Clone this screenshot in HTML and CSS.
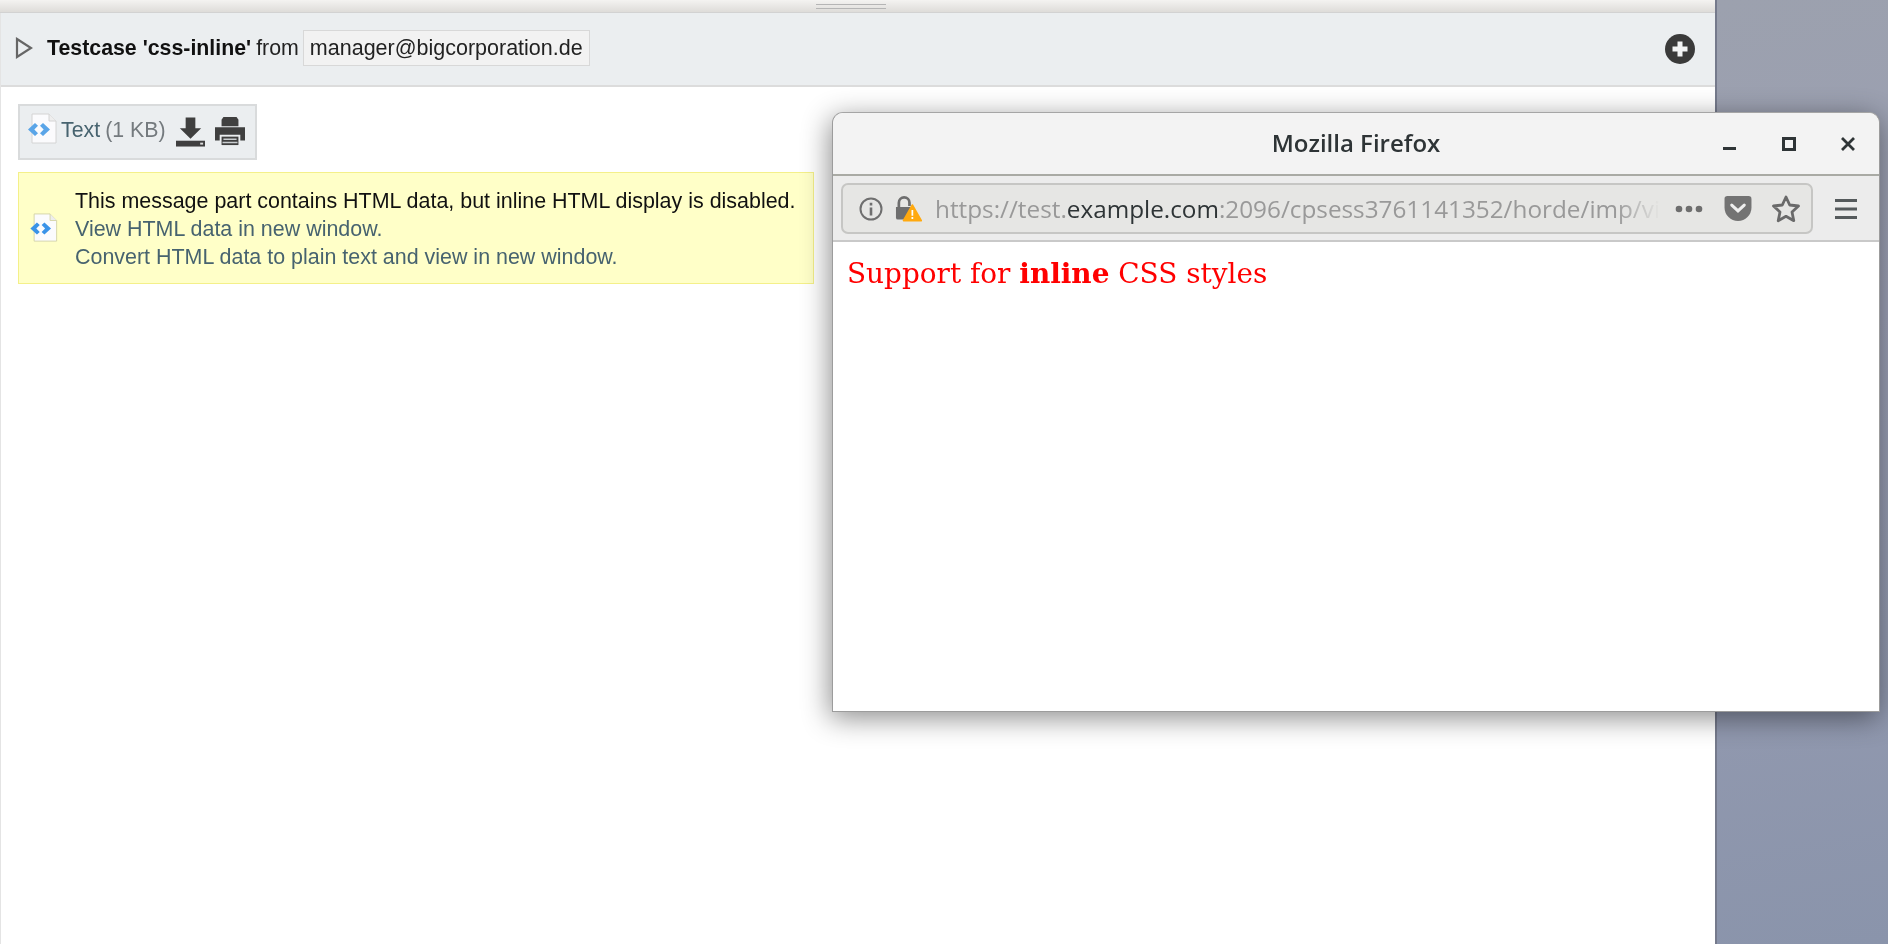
FILE: index.html
```html
<!DOCTYPE html>
<html lang="en">
<head>
<meta charset="utf-8">
<title>Testcase</title>
<link rel="stylesheet" href="styles.css">
</head>
<body>
<main class="mail">
  <div class="grip"><span class="grip-lines"></span></div>
  <header class="head">
    <svg class="arrow" viewBox="0 0 18 22"><path d="M2 2 L16 11 L2 20 Z" fill="none" stroke="#666" stroke-width="2.200"/></svg>
    <span class="subject">Testcase 'css-inline'</span>
    <span class="from">from</span>
    <span class="addr">manager@bigcorporation.de</span>
    <svg class="plus" viewBox="0 0 30 30"><circle cx="15" cy="15" r="15" fill="#3a3a3a"/><path d="M12.500 7.500h5v5h5v5h-5v5h-5v-5h-5v-5h5z" fill="#f2f3f4"/></svg>
  </header>
  <section class="body">
    <div class="part">
      <svg class="file" viewBox="0 0 30 32"><path d="M5 1h17l7 7v22H5z" fill="#fbfbfd" stroke="#d4d4d4"/><path d="M22 1v7h7" fill="#eee" stroke="#d4d4d4"/><path d="M8 10 1 16.500 8 23l3-2.800-3.700-3.700 3.700-3.700zM16 10l7 6.500-7 6.500-3-2.800 3.700-3.700-3.700-3.700z" fill="#5aa5e8"/></svg>
      <span class="part-name">Text</span>
      <span class="part-size">(1 KB)</span>
      <svg class="dl" viewBox="0 0 32 30"><path d="M11 0h10v11h6L16 22 5 11h6z" fill="#3f3f3f"/><path d="M1 24h30v6H1z" fill="#3f3f3f"/><path d="M26 26h3v2h-3z" fill="#ddd"/></svg>
      <svg class="print" viewBox="0 0 32 30"><path d="M9 0h14l2 3v7H7V3z" fill="#3f3f3f"/><path d="M0 11h32v14h-5v-6H5v6H0z" fill="#3f3f3f"/><path d="M7 21h18v9H7z" fill="#3f3f3f"/><path d="M9 23h14v1.500H9zM8 26.500h16v1.500H8z" fill="#c9cdd0"/></svg>
    </div>
    <div class="notice">
      <svg class="file-sm" viewBox="0 0 30 32"><path d="M5 1h17l7 7v22H5z" fill="#fbfbfd" stroke="#d4d4a8"/><path d="M22 1v7h7" fill="#eee" stroke="#d4d4a8"/><path d="M8 10 1 16.500 8 23l3-2.800-3.700-3.700 3.700-3.700zM16 10l7 6.500-7 6.500-3-2.800 3.700-3.700-3.700-3.700z" fill="#3a93e8"/></svg>
      <div class="notice-text">
        <div class="notice-msg">This message part contains HTML data, but inline HTML display is disabled.</div>
        <div class="notice-link">View HTML data in new window.</div>
        <div class="notice-link">Convert HTML data to plain text and view in new window.</div>
      </div>
    </div>
  </section>
</main>
<aside class="desktop"></aside>
<div class="ff">
  <div class="ff-title">
    <span class="ff-name">Mozilla Firefox</span>
    <div class="ff-controls">
      <svg class="wc" viewBox="0 0 16 16"><path d="M1 11h13v3H1z" fill="#2e3436"/></svg>
      <svg class="wc" viewBox="0 0 16 16"><path d="M1 1h14v14H1zM4 4v8h8V4z" fill="#2e3436" fill-rule="evenodd"/></svg>
      <svg class="wc" viewBox="0 0 16 16"><path d="M2 2l12 12M14 2L2 14" stroke="#2e3436" stroke-width="2.800" fill="none"/></svg>
    </div>
  </div>
  <div class="ff-toolbar">
    <div class="urlbar">
      <svg class="info" viewBox="0 0 24 24"><circle cx="12" cy="12" r="10.500" fill="none" stroke="#6f6f6f" stroke-width="2"/><path d="M10.700 10.500h2.600v8h-2.600zM10.700 5.800h2.600v2.700h-2.600z" fill="#6f6f6f"/></svg>
      <svg class="lock" viewBox="0 0 28 26"><path d="M1 11h16v13H3q-2 0-2-2z" fill="#6e6e6e"/><path d="M4 11V6.500a5.500 5.500 0 0 1 11 0V10" fill="none" stroke="#6e6e6e" stroke-width="2.800"/><path d="M18 9 L27 25 H9 Z" fill="#ffa90f" stroke="#ffa90f" stroke-width="2" stroke-linejoin="round"/><path d="M17.100 14h1.800v6h-1.800zM17.100 21.300h1.800v2h-1.800z" fill="#fff"/></svg>
      <div class="url"><span class="url-dim">https://test.</span><span class="url-host">example.com</span><span class="url-dim">:2096/cpsess3761141352/horde/imp/vi</span></div>
      <svg class="more" viewBox="0 0 30 8"><circle cx="5" cy="4" r="3.300" fill="#6e6e6e"/><circle cx="15" cy="4" r="3.300" fill="#6e6e6e"/><circle cx="25" cy="4" r="3.300" fill="#6e6e6e"/></svg>
      <svg class="pocket" viewBox="0 0 28 26"><path d="M3 0h22q3 0 3 3v9a14 14 0 0 1-28 0V3q0-3 3-3z" fill="#737373"/><path d="M7.500 9.500 14 15.500l6.500-6" fill="none" stroke="#eee" stroke-width="3.200" stroke-linecap="round"/></svg>
      <svg class="star" viewBox="0 0 30 30"><path d="M15 3l3.700 8 8.800 1-6.500 6 1.800 8.700L15 22.300 7.200 26.700 9 18l-6.500-6 8.800-1z" fill="none" stroke="#6a6a6a" stroke-width="2.800" stroke-linejoin="round"/></svg>
    </div>
    <svg class="burger" viewBox="0 0 22 20"><path d="M0 0h22v3H0zM0 8.500h22v3H0zM0 17h22v3H0z" fill="#555a5c"/></svg>
  </div>
  <div class="ff-page">Support for <b>inline</b> CSS styles</div>
</div>
</body>
</html>
```
FILE: styles.css
```css
html, body { margin: 0; height: 100%; }
body { display: flex; height: 944px; overflow: hidden; font-family: "Liberation Sans", Arial, sans-serif; position: relative; background: #9a9fb2; }
svg { display: block; flex: none; }

.mail { width: 1715px; flex: none; background: #fff; display: flex; flex-direction: column; border-left: 1px solid #e4e4e4; box-sizing: border-box; }
.grip { height: 12px; background: linear-gradient(#f4f3f1, #dedcd9); border-bottom: 1px solid #d2d2d2; display: flex; justify-content: center; margin-left: -1px; padding-right: 14px; }
.grip-lines { width: 70px; height: 3px; margin-top: 4px; border-top: 1px solid #b5b5b5; border-bottom: 1px solid #b5b5b5; }
.head { height: 72px; background: #ebeef0; border-bottom: 2px solid #dcdcdc; display: flex; align-items: center; padding: 0 20px 0 14px; font-size: 21.330px; color: #222; filter: blur(.45px); }
.arrow { width: 18px; height: 22px; margin-right: 14px; margin-top: -2px; }
.subject { font-weight: bold; color: #111; margin-right: 5px; margin-top: -1px; }
.from { margin-right: 4px; margin-top: -1px; }
.addr { background: #f2f2f2; border: 1px solid #d8d8d8; padding: 0 6px; height: 36px; line-height: 35px; box-sizing: border-box; font-size: 21.500px; margin-top: -3px; }
.plus { width: 30px; height: 30px; margin-left: auto; margin-top: -1px; }

.body { padding: 17px 0 0 17px; display: flex; flex-direction: column; align-items: flex-start; }
.part { width: 239px; height: 56px; box-sizing: border-box; background: #ebeef0; border: 2px solid #d9dbdc; display: flex; align-items: center; padding: 0 0 0 6px; font-size: 21.330px; filter: blur(.45px); }
.file { width: 32px; height: 32px; margin-top: -6px; margin-right: 3px; }
.part-name { color: #47636f; margin-right: 5px; margin-top: -4px; }
.part-size { color: #747a7e; margin-top: -4px; }
.dl { width: 31px; height: 30px; margin-left: 9px; }
.print { width: 30px; height: 30px; margin-left: 9px; margin-top: -2px; }

.notice { width: 796px; height: 112px; margin-top: 12px; box-sizing: border-box; background: #ffffc8; border: 1px solid #f4f08a; display: flex; align-items: center; font-size: 21.450px; line-height: 28px; filter: blur(.45px); }
.file-sm { width: 29px; height: 30px; margin: 0 17px 0 10px; }
.notice-text { margin-top: 1px; }
.notice-msg { color: #111; }
.notice-link { color: #47636f; }

.desktop { flex: 1; background: linear-gradient(170deg, #9ca1ae 0%, #9a9eb3 35%, #8a94ab 100%); border-left: 2px solid #757a8c; }

.ff { position: absolute; left: 832px; top: 112px; width: 1048px; height: 600px; box-sizing: border-box; border: 1px solid #9c9c9c; border-top-color: #a5a5a5; border-radius: 11px 11px 0 0; background: #fff; box-shadow: -2px 6px 28px rgba(0,0,0,.45); display: flex; flex-direction: column; overflow: hidden; }
.ff-title { height: 63px; flex: none; background: #f3f3f3; border-bottom: 2px solid #a9aaa4; display: flex; align-items: center; justify-content: center; position: relative; box-sizing: border-box; }
.ff-name { font-family: "Open Sans", sans-serif; font-weight: 600; font-size: 24px; color: #2e3436; filter: blur(.45px); margin-top: -2px; }
.ff-controls { position: absolute; right: 23px; top: 23px; display: flex; gap: 43px; }
.wc { width: 16px; height: 16px; }
.ff-toolbar { height: 66px; flex: none; box-sizing: border-box; background: #ececec; border-bottom: 2px solid #c9c9c9; display: flex; align-items: center; padding: 1px 0 0 8px; }
.urlbar { width: 972px; height: 51px; box-sizing: border-box; background: #e6e6e4; border: 2px solid #c6c6c4; border-radius: 7px; display: flex; align-items: center; padding: 0 10px 0 16px; }
.info { width: 24px; height: 24px; margin-right: 12px; }
.lock { width: 27px; height: 26px; margin-right: 13px; }
.url { font-family: "Open Sans", sans-serif; font-size: 24.300px; white-space: nowrap; color: #999; filter: blur(.45px); -webkit-mask-image: linear-gradient(90deg, #000 94%, transparent 100%); mask-image: linear-gradient(90deg, #000 94%, transparent 100%); }
.url-host { color: #2e3436; }
.more { width: 30px; height: 8px; margin-left: auto; }
.pocket { width: 28px; height: 25px; margin-left: 20px; }
.star { width: 30px; height: 30px; margin-left: 19px; }
.burger { width: 22px; height: 20px; margin-left: 22px; }
.ff-page { flex: 1; background: #fff; color: #f00; font-family: "DejaVu Serif", serif; font-size: 27.900px; padding: 15px 14px; filter: blur(.4px); }
```
